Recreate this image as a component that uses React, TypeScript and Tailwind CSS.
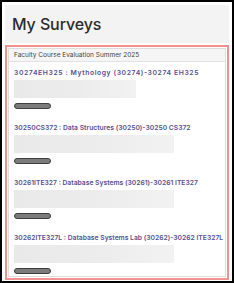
import React from "react";

type Survey = {
  id: string;
  title: string;
  blurWidth: number;
};

const surveys: Survey[] = [
  { id: "30274", title: "30274EH325 : Mythology (30274)-30274 EH325", blurWidth: 122 },
  { id: "30250", title: "30250CS372 : Data Structures (30250)-30250 CS372", blurWidth: 160 },
  { id: "30261", title: "30261ITE327 : Database Systems (30261)-30261 ITE327", blurWidth: 160 },
  { id: "30262", title: "30262ITE327L : Database Systems Lab (30262)-30262 ITE327L", blurWidth: 160 },
];

export default function App() {
  return (
    <div className="h-[283px] w-[234px] overflow-hidden bg-white" style={{ fontFamily: "Inter, 'Liberation Sans', sans-serif" }}>
      <div className="h-full w-full border-2 border-black bg-white px-[3px] pt-[3px]">
        <header className="flex h-[38px] items-center bg-[#f3f3f3] pl-[7px]">
          <h1 className="text-[16px] font-medium leading-none tracking-[-0.1px] text-[#2b2b2b]">My Surveys</h1>
        </header>

        <section className="mt-[2px] h-[235px] border-2 border-[#f29090] p-[1px]">
          <div className="h-full border border-[#dcdcdc] border-r-[#cfe3e6]">
            <div className="flex h-[13px] items-center border-b border-[#e2e2e2] bg-[#f5f5f5] pl-[5px]">
              <span className="text-[6.5px] leading-none text-[#444]">Faculty Course Evaluation Summer 2025</span>
            </div>

            <div className="flex flex-col gap-[15px] pl-[5px] pt-[7px]">
              {surveys.map((survey, i) => (
                <article key={survey.id} className="flex flex-col">
                  <a
                    className={
                      i === 0
                        ? "whitespace-nowrap text-[6.8px] font-semibold leading-[8px] tracking-[0.6px] text-[#55508f]"
                        : "whitespace-nowrap text-[6.75px] font-semibold leading-[8px] text-[#55508f]"
                    }
                  >
                    {survey.title}
                  </a>
                  <div
                    className="mt-[3px] h-[18px] bg-gradient-to-r from-[#e9e9e9] via-[#ececec] to-[#f2f2f2]"
                    style={{ width: survey.blurWidth }}
                  />
                  <div className="mt-[5px] h-[6px] w-[37px] rounded-full border border-[#3f3f3f] bg-[#7b7b7b]" />
                </article>
              ))}
            </div>
          </div>
        </section>
      </div>
    </div>
  );
}
